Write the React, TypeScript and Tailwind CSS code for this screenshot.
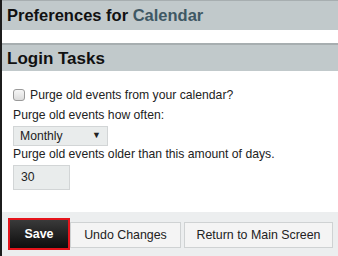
export default function App() {
  return (
    <div className="w-[338px] h-[256px] overflow-hidden bg-white border-l-2 border-[#1c1c1c] flex flex-col" style={{ fontFamily: '"Liberation Sans", Arial, sans-serif' }}>
      <div className="h-[30px] bg-[#c1c9cb] border-t border-[#a7aeb0] pl-[5px] flex items-center">
        <h1 className="text-[16.5px] font-bold text-[#111] leading-none">
          Preferences for <span className="text-[#3f5864]">Calendar</span>
        </h1>
      </div>
      <div className="h-[13px]" />
      <div className="h-[28px] bg-[#c1c9cb] border-t-2 border-[#a7aeb0] pl-[5px] flex items-center">
        <h2 className="text-[17px] font-bold text-[#111] leading-none">Login Tasks</h2>
      </div>
      <div className="flex-1 px-[11px] pt-[16px] text-[12.2px] text-[#222]">
        <label className="flex items-center gap-[5px] h-[16px]">
          <span className="w-[12px] h-[12px] rounded-[3px] border border-[#9a9a9a] bg-gradient-to-b from-[#f6f6f6] to-[#dcdcdc]" />
          Purge old events from your calendar?
        </label>
        <div className="mt-[5px] h-[15px] leading-[15px]">Purge old events how often:</div>
        <div className="mt-[3px] w-[95px] h-[20px] bg-[#e9ecec] border border-[#d2d5d6] flex items-center justify-between pl-[6px] pr-[6px]">
          <span>Monthly</span>
          <span className="text-[9px]">▼</span>
        </div>
        <div className="mt-[1px] h-[15px] leading-[15px]">Purge old events older than this amount of days.</div>
        <div className="mt-[3px] w-[57px] h-[25px] bg-[#e9ecec] border border-[#d2d5d6] flex items-center pl-[7px]">30</div>
      </div>
      <div className="h-[44px] bg-[#eceeef] flex items-start pt-[6px] pl-[6px] text-[12.4px]">
        <button className="w-[62px] h-[32px] border-2 border-[#e5141b] flex items-stretch">
          <span className="flex-1 bg-gradient-to-b from-[#3a3a3a] to-[#0e0e0e] text-white font-bold flex items-center justify-center">Save</span>
        </button>
        <button className="w-[111px] h-[26px] mt-[4px] bg-[#f4f4f4] border border-[#cfd2d3] text-[#222]">Undo Changes</button>
        <button className="ml-[3px] w-[149px] h-[26px] mt-[4px] bg-[#f4f4f4] border border-[#cfd2d3] text-[#222]">Return to Main Screen</button>
      </div>
    </div>
  );
}
